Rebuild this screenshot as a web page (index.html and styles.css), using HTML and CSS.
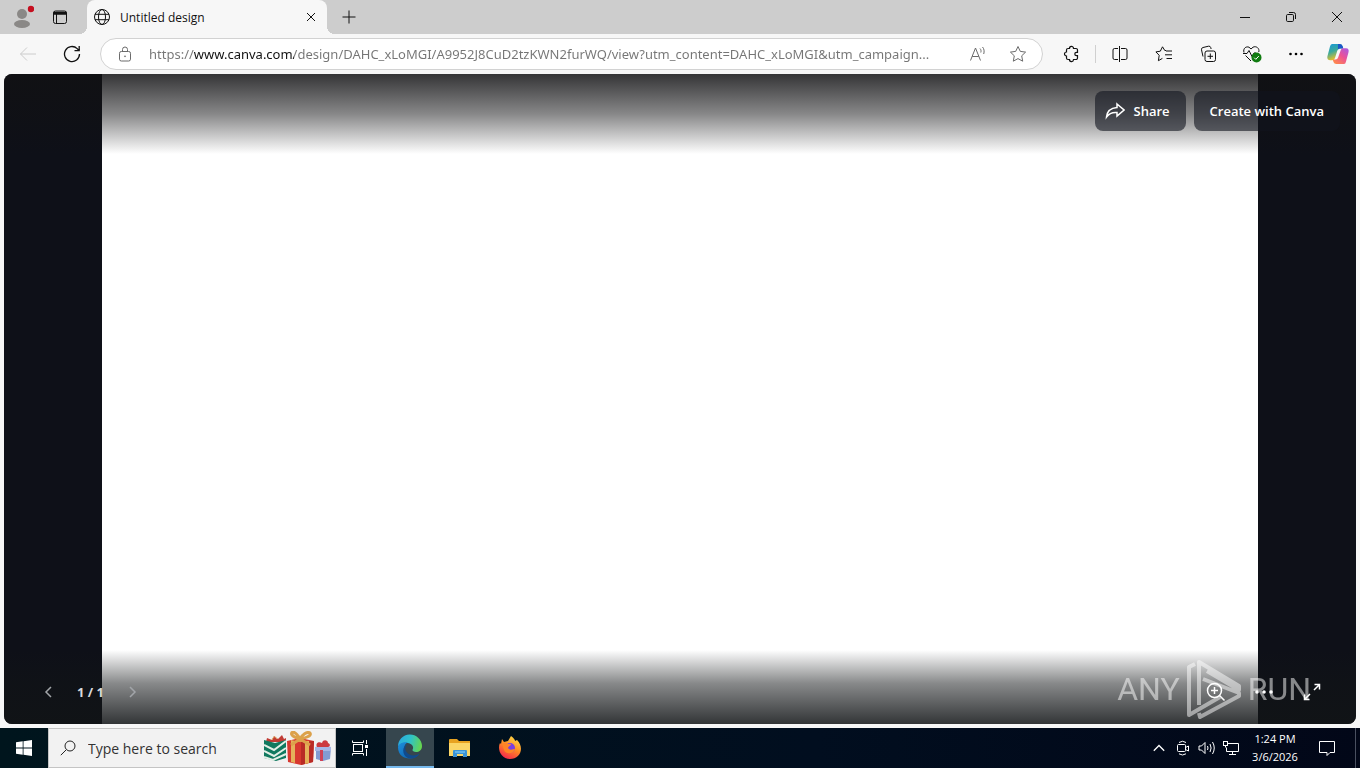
FILE: index.html
```html
<!DOCTYPE html>
<html lang="en">
<head>
    <meta charset="UTF-8">
    <meta name="viewport" content="width=device-width, initial-scale=1.0">
    <title>Untitled design</title>
    <link rel="stylesheet" href="styles.css">
</head>
<body>
    <header class="tab-strip">
        <div class="strip-left">
            <button class="profile" aria-label="Profile">
                <svg width="24" height="24" viewBox="0 0 24 24"><circle cx="12" cy="9" r="5" fill="#8a8886"/><ellipse cx="12" cy="19" rx="8" ry="4" fill="#8a8886"/><circle cx="21" cy="4" r="3.2" fill="#c50f1f"/></svg>
            </button>
            <button class="workspaces" aria-label="Tab actions">
                <svg class="icon" width="16" height="16" viewBox="0 0 16 16"><rect x="1.5" y="2" width="13" height="12.5" rx="2"/><path d="M1.5 3.5h13M2 5h12" stroke-width="1.6"/><path d="M4.5 5v9"/></svg>
            </button>
        </div>
        <div class="tab">
            <svg class="icon" width="18" height="18" viewBox="0 0 18 18"><circle cx="9" cy="9" r="7.5"/><ellipse cx="9" cy="9" rx="3.5" ry="7.5"/><path d="M2 6.3h14M2 11.7h14"/></svg>
            <span class="tab-title">Untitled design</span>
            <button class="tab-close" aria-label="Close tab">
                <svg class="icon" width="10" height="10" viewBox="0 0 10 10"><path d="M1 1l8 8M9 1l-8 8"/></svg>
            </button>
        </div>
        <button class="new-tab" aria-label="New tab">
            <svg class="icon" width="14" height="14" viewBox="0 0 14 14"><path d="M7 .5v13M.5 7h13"/></svg>
        </button>
        <div class="window-buttons">
            <button aria-label="Minimize"><svg class="icon" width="10" height="10" viewBox="0 0 10 10"><path d="M0 5.5h10"/></svg></button>
            <button aria-label="Restore"><svg class="icon" width="12" height="12" viewBox="0 0 12 12"><rect x="1.5" y="3.5" width="7" height="7" rx="1.2"/><path d="M4 1.5h4.5a2 2 0 0 1 2 2V8"/></svg></button>
            <button aria-label="Close"><svg class="icon" width="12" height="12" viewBox="0 0 12 12"><path d="M1 1l10 10M11 1L1 11"/></svg></button>
        </div>
    </header>

    <nav class="toolbar">
        <button class="tool disabled" aria-label="Back">
            <svg class="icon" width="18" height="16" viewBox="0 0 18 16"><path d="M17 8H1.500M8 1.500L1.500 8 8 14.500"/></svg>
        </button>
        <button class="tool" aria-label="Refresh">
            <svg class="icon" width="18" height="18" viewBox="0 0 18 18"><path d="M16.500 9a7.500 7.500 0 1 1-2.300-5.400L16 5.500M16.200 1v4.700h-4.700" stroke-width="1.300"/></svg>
        </button>
        <div class="address">
            <button class="lock" aria-label="Site information">
                <svg class="icon" width="14" height="16" viewBox="0 0 14 16"><rect x="1.500" y="5.500" width="11" height="9.500" rx="1.800"/><path d="M4.500 5.500V3.500a2.500 2.500 0 0 1 5 0v2"/><circle cx="7" cy="10.300" r=".5"/></svg>
            </button>
            <input class="url" type="text" aria-label="Address" value="https://www.canva.com/design/DAHC_xLoMGI/A9952J8CuD2tzKWN2furWQ/view?utm_content=DAHC_xLoMGI&amp;utm_campaign...">
            <button class="address-action" aria-label="Read aloud">
                <svg class="icon" width="18" height="16" viewBox="0 0 18 16"><path d="M1.500 14.500L6.500 2l5 12.500M3.200 10.500h6.600M11 2.500c1 1 1.300 2.500.8 4M13.500 1c1.700 2 2 4.300 1.200 7"/></svg>
            </button>
            <button class="address-action" aria-label="Add to favorites">
                <svg class="icon" width="18" height="18" viewBox="0 0 18 18"><path d="M9 1.500l2.300 4.900 5.300.7-3.900 3.700 1 5.400L9 13.600l-4.700 2.600 1-5.400-3.900-3.700 5.300-.7z"/></svg>
            </button>
        </div>
        <button class="tool" aria-label="Extensions">
            <svg class="icon" width="18" height="18" viewBox="0 0 18 18"><path d="M4.500 5A1.500 1.500 0 0 1 6 3.500h1.500a2 2 0 0 1 4-.2v.2H14A1.500 1.500 0 0 1 15.500 5v2.300h-1a1.700 1.700 0 0 0 0 3.400h1V13a1.500 1.500 0 0 1-1.500 1.500h-2.500v.3a2 2 0 0 1-4-.3H6A1.500 1.500 0 0 1 4.500 13v-2a2 2 0 0 1 0-4z" stroke-width="1.200"/></svg>
        </button>
        <span class="divider"></span>
        <button class="tool" aria-label="Split screen">
            <svg class="icon" width="18" height="18" viewBox="0 0 18 18"><path d="M7 3.500H3.500A1.500 1.500 0 0 0 2 5v8a1.500 1.500 0 0 0 1.500 1.500H7M10 3.500h4.500A1.500 1.500 0 0 1 16 5v8a1.500 1.500 0 0 1-1.500 1.500H10M8.500 1v16"/></svg>
        </button>
        <button class="tool" aria-label="Favorites">
            <svg class="icon" width="18" height="18" viewBox="0 0 18 18"><path d="M11 5.500H9.800L7.500 1.800 5.300 6.200l-4.400.7 3.300 3.400-.8 5.400 4-2.300M11 6h6M10 9.800h7M11.500 13.500H17"/></svg>
        </button>
        <button class="tool" aria-label="Collections">
            <svg class="icon" width="18" height="18" viewBox="0 0 18 18"><path d="M4 11.500l-1.500-6.700a2 2 0 0 1 1.500-2.300l5.500-1.300a2 2 0 0 1 2.300 1.500l.3 1.300"/><rect x="6" y="6" width="10.500" height="10.500" rx="2"/><path d="M11.300 8.500v5.500M8.500 11.300H14"/></svg>
        </button>
        <button class="tool" aria-label="Browser essentials">
            <svg class="icon" width="20" height="18" viewBox="0 0 20 18"><path d="M2 7.500C.8 3.500 4 1 7 2.200L9 4l2-1.800c3-1.600 6.800 1 5.800 4.800M3.500 10.500L9 16M1 8.500h4l2-3 3 6 2-3.500h2"/><circle cx="14.500" cy="12.500" r="5" fill="#107c10" stroke="none"/><path d="M12.200 12.700l1.600 1.600 3-3.200" stroke="#fff"/></svg>
        </button>
        <button class="tool" aria-label="Settings and more">
            <svg width="16" height="16" viewBox="0 0 16 16"><circle cx="2.500" cy="8" r="1.300"/><circle cx="8" cy="8" r="1.300"/><circle cx="13.500" cy="8" r="1.300"/></svg>
        </button>
        <button class="tool copilot" aria-label="Copilot">
            <svg width="24" height="24" viewBox="0 0 24 24">
                <defs>
                    <linearGradient id="cpA" x1="0" y1="0" x2=".4" y2="1"><stop offset="0" stop-color="#1497dc"/><stop offset=".5" stop-color="#3ba99b"/><stop offset="1" stop-color="#f4c21f"/></linearGradient>
                    <linearGradient id="cpB" x1="1" y1="0" x2=".2" y2="1"><stop offset="0" stop-color="#a35bea"/><stop offset=".5" stop-color="#ec5296"/><stop offset="1" stop-color="#ff8a4c"/></linearGradient>
                </defs>
                <path d="M6 2h7.500a3 3 0 0 1 3 2l.8 2.500h-3a3 3 0 0 0-3 2.200L9 16a3 3 0 0 1-3 2.200H4C1.500 18.200 1 16 1.500 14L4 4.500Q4.500 2 6 2z" fill="url(#cpA)"/>
                <path d="M12 2h1.500a3 3 0 0 1 3 2l.8 2.500h-3a3 3 0 0 0-2.400 1.300z" fill="#1c56c9"/>
                <path d="M18 22h-7.500a3 3 0 0 1-3-2l-.8-2.500h2.500a3 3 0 0 0 3-2.200L14.800 8A2.500 2.500 0 0 1 17 6.200h3c2.500 0 3 2 2.500 4L20 19.500Q19.500 22 18 22z" fill="url(#cpB)"/>
            </svg>
        </button>
    </nav>

    <main class="viewer">
        <div class="design-page"></div>
        <div class="shade shade-top"></div>
        <div class="shade shade-bottom"></div>
        <div class="viewer-top">
            <button class="canva-button share">
                <svg class="icon" width="20" height="18" viewBox="0 0 20 18"><path d="M12 2l7 6-7 6v-3.500C7 10 4 11.500 1.500 15 2 9.500 6 6 12 5.500z"/></svg>
                Share
            </button>
            <button class="canva-button">Create with Canva</button>
        </div>
        <div class="watermark">
            <span>ANY</span>
            <svg width="58" height="64" viewBox="0 0 58 64" fill="none" stroke="currentColor" stroke-width="4" stroke-linejoin="round"><path d="M10 7L4 10v48l31-18M14 48V5l40 24v4L22 14M18 22l36 14v3L15 60l-1-4"/></svg>
            <span>RUN</span>
        </div>
        <div class="viewer-bottom">
            <button class="pager" aria-label="Previous page"><svg class="icon" width="8" height="12" viewBox="0 0 8 12"><path d="M7 1L2 6l5 5"/></svg></button>
            <span class="page-count">1 / 1</span>
            <button class="pager" aria-label="Next page"><svg class="icon" width="8" height="12" viewBox="0 0 8 12"><path d="M1 1l5 5-5 5"/></svg></button>
            <div class="view-tools">
                <button aria-label="Zoom"><svg class="icon" width="20" height="20" viewBox="0 0 20 20"><circle cx="8.500" cy="8.500" r="7"/><path d="M13.500 13.500l5 5M8.500 5v7M5 8.500h7"/></svg></button>
                <button aria-label="More"><svg width="20" height="6" viewBox="0 0 20 6" fill="#fff"><circle cx="3" cy="3" r="1.800"/><circle cx="10" cy="3" r="1.800"/><circle cx="17" cy="3" r="1.800"/></svg></button>
                <button aria-label="Full screen"><svg class="icon" width="18" height="18" viewBox="0 0 18 18"><path d="M11 7l5.500-5.500M11.500 1.500h5v5M7 11l-5.500 5.500M1.500 11.500v5h5"/></svg></button>
            </div>
        </div>
    </main>

    <footer class="taskbar">
        <button class="task" aria-label="Start">
            <svg width="16" height="16" viewBox="0 0 16 16" fill="#fff"><path d="M0 2.200L6.700 1.300v6.300H0zM7.500 1.200L16 0v7.600H7.500zM0 8.400h6.700v6.300L0 13.800zM7.500 8.400H16V16l-8.500-1.200z"/></svg>
        </button>
        <label class="search">
            <svg class="icon" width="16" height="16" viewBox="0 0 16 16"><circle cx="10" cy="6" r="5"/><path d="M6.300 9.700L.8 15.200"/></svg>
            <input type="text" placeholder="Type here to search" aria-label="Type here to search">
            <svg class="gifts" width="68" height="34" viewBox="0 0 68 34">
                <path d="M2 11l1-4 5 2 2-4 4 3 4-4 2 4 2-1v4z" fill="#c13b34"/>
                <path d="M8 9q2-6 5-1" stroke="#e0a860" fill="none"/>
                <path d="M0 9l11 3 11-3v18l-10 3-12-3z" fill="#11795f"/>
                <path d="M0 14l10 5 12-9M0 20l10 5 12-8M0 26l9 3 13-6" stroke="#e3efe6" stroke-width="2" fill="none"/>
                <path d="M23 10l13-3 14 3-1 21-12 3-13-3z" fill="#d8382f"/>
                <path d="M37 11l13-1-1 21-12 3z" fill="#b92b26"/>
                <path d="M27 9l4 1v22l-4-1zM41 10l4 0v22l-4 1z" fill="#e5b05a"/>
                <path d="M36 8C31 7 26 4 28 1.500c3-1.500 6 3 8 6.500 2-4 7-8 10-6 2 3-5 5-10 6l10 6M36 8l-9 6" stroke="#dca14b" stroke-width="3" fill="none"/>
                <path d="M52 17l7-2 8 2-1 11-7 2-7-2z" fill="#829bd2"/>
                <path d="M51 16l8-2 8 2v4H51z" fill="#a6b6e4"/>
                <path d="M56 19h3v11h-3z" fill="#cf4257"/>
                <path d="M53 16c-2-4 2-6 5-4 1-4 6-3 6 0 3 1 2 4 0 4z" fill="#cc3a3f"/>
            </svg>
        </label>
        <div class="apps">
            <button class="task" aria-label="Task view">
                <svg class="icon" width="18" height="18" viewBox="0 0 18 18"><rect x="2.500" y="5.500" width="9" height="7"/><path d="M1.500 1.500v2h11v-2M1.500 16.500v-2h11v2M15.500 1v4M15.500 10v7"/><path d="M15.500 6v3" stroke-width="3"/></svg>
            </button>
            <button class="task active" aria-label="Microsoft Edge">
                <svg width="26" height="26" viewBox="0 0 26 26">
                    <defs>
                        <linearGradient id="edgeTop" x1="0" y1=".3" x2="1" y2=".5"><stop offset="0" stop-color="#2aa9e0"/><stop offset=".5" stop-color="#2fc2c8"/><stop offset="1" stop-color="#66d64f"/></linearGradient>
                        <linearGradient id="edgeLow" x1="0" y1="0" x2="1" y2="1"><stop offset="0" stop-color="#1c8fdd"/><stop offset="1" stop-color="#0c59a4"/></linearGradient>
                    </defs>
                    <path d="M1 13A12 12 0 0 1 25 12c0 4-3 6-6 6-2 0-4-1-3.500-2.200C17 14 16 10 11 9 6 8.500 2 10 1 13z" fill="url(#edgeTop)"/>
                    <path d="M1 13c1-4 6-5.500 10-4.500-3 1-4 3.500-3.500 7 .8 5 6 8 11 6.700l3.500-2C17 27 1 26.500 1 13z" fill="url(#edgeLow)"/>
                    <path d="M11 10c-3 2-3.500 5-1.500 8 3 4.500 9.500 4 13 1.500-2 4-8 6.500-12 4.300C5 21 4.500 12 11 10z" fill="#114a8b"/>
                </svg>
            </button>
            <button class="task" aria-label="File Explorer">
                <svg width="22" height="20" viewBox="0 0 22 20"><path d="M0 2q0-1 1-1h7l2 2h11v15H0z" fill="#e8a321"/><path d="M0 5h21v13H0z" fill="#fbd667"/><path d="M4 19v-6q0-1 1-1h12q1 0 1 1v6h-4v-3H8v3z" fill="#3b93d6"/><path d="M6 13h10v2H6z" fill="#63b5ec"/></svg>
            </button>
            <button class="task" aria-label="Firefox">
                <svg width="24" height="24" viewBox="0 0 24 24">
                    <defs><linearGradient id="fox" x1=".8" y1="0" x2=".3" y2="1"><stop offset="0" stop-color="#ffe14a"/><stop offset=".5" stop-color="#ff8a24"/><stop offset="1" stop-color="#f5254d"/></linearGradient></defs>
                    <path d="M4 3l2 3 4-1 3-5c3 2 4 4 4 5l2-1c8 8 3 19-7 19C3 23-1 13 2 7l1 1z" fill="url(#fox)"/>
                    <circle cx="12" cy="12" r="5" fill="#7a3fe0"/>
                    <path d="M4 8c3-2 5-1 6 0h3c0 2-3 2-3 4 2 3 5 1 7 1-1 5-9 6-11 1z" fill="#ff8426"/>
                </svg>
            </button>
        </div>
        <div class="tray">
            <button class="tray-icon" aria-label="Show hidden icons"><svg class="icon" width="12" height="8" viewBox="0 0 12 8"><path d="M.8 6.800L6 1.500l5.200 5.300" stroke-width="1.300"/></svg></button>
            <button class="tray-icon" aria-label="Meet now"><svg class="icon" width="14" height="16" viewBox="0 0 14 16"><rect x="1.500" y="4.500" width="8" height="7" rx="1"/><path d="M9.500 7.500l3-1.500v5l-3-1.500M3 2.500Q6.500 0 10 2.500M3 13.800q3.500 2.400 7 0"/></svg></button>
            <button class="tray-icon" aria-label="Volume"><svg class="icon" width="18" height="16" viewBox="0 0 18 16"><path d="M1 6v4h2.500L7 13.500v-11L3.500 6zM9.500 6q1 2 0 4M12 4q2.200 4 0 8M14.500 2q3.500 6 0 12"/></svg></button>
            <button class="tray-icon" aria-label="Network"><svg class="icon" width="18" height="16" viewBox="0 0 18 16"><path d="M6 3.500h10.500v8H4.500v-4M10.500 11.500v3M7 14.500h7"/><rect x="1.500" y="1.500" width="4" height="4"/><path d="M3.500 5.500v2"/></svg></button>
            <button class="clock"><span>1:24 PM</span><span>3/6/2026</span></button>
            <button class="notifications" aria-label="Notifications"><svg class="icon" width="18" height="18" viewBox="0 0 18 18"><path d="M1.500 2.500h15v11H12l-3 3v-3H1.500z"/></svg></button>
            <button class="show-desktop" aria-label="Show desktop"></button>
        </div>
    </footer>
</body>
</html>
```
FILE: styles.css
```css
* {
    box-sizing: border-box;
}
body {
    margin: 0;
    height: 100vh;
    display: flex;
    flex-direction: column;
    overflow: hidden;
    background: #f7f7f7;
    color: #111;
    font-family: "Open Sans", "Noto Sans", sans-serif;
    font-size: 12px;
}
button {
    display: flex;
    align-items: center;
    justify-content: center;
    margin: 0;
    padding: 0;
    border: 0;
    background: none;
    color: inherit;
    font: inherit;
}
input {
    min-width: 0;
    padding: 0;
    border: 0;
    outline: 0;
    background: none;
    font: inherit;
}
svg {
    display: block;
    flex: none;
}
.icon {
    fill: none;
    stroke: currentColor;
}

/* tabs */
.tab-strip {
    display: flex;
    flex: none;
    height: 34px;
    background: #cdcdcd;
}
.strip-left {
    display: flex;
    width: 87px;
    padding-left: 4px;
}
.profile {
    width: 36px;
}
.workspaces {
    width: 40px;
}
.tab {
    position: relative;
    display: flex;
    align-items: center;
    gap: 9px;
    width: 240px;
    padding: 0 6px;
    border-radius: 8px 8px 0 0;
    background: #f7f7f7;
}
.tab::before,
.tab::after {
    content: "";
    position: absolute;
    bottom: 0;
    width: 8px;
    height: 8px;
}
.tab::before {
    right: 100%;
    background: radial-gradient(circle at 0 0, #cdcdcd 8px, #f7f7f7 8px);
}
.tab::after {
    left: 100%;
    background: radial-gradient(circle at 100% 0, #cdcdcd 8px, #f7f7f7 8px);
}
.tab-title {
    flex: 1;
}
.tab-close {
    width: 20px;
    height: 20px;
}
.new-tab {
    width: 43px;
}
.window-buttons {
    display: flex;
    margin-left: auto;
}
.window-buttons button {
    width: 46px;
}

/* toolbar */
.toolbar {
    display: flex;
    flex: none;
    align-items: center;
    height: 40px;
    padding: 0 2px 0 6px;
}
.tool {
    flex: none;
    width: 44px;
    height: 32px;
}
.disabled {
    color: #ccc;
}
.copilot {
    width: 40px;
}
.divider {
    width: 1px;
    height: 18px;
    margin: 0 2px;
    background: #d0d0d0;
}
.address {
    display: flex;
    flex: 1;
    align-items: center;
    height: 32px;
    margin: 0 6px;
    padding-right: 4px;
    border: 1px solid #d2d2d2;
    border-radius: 16px;
    background: #fff;
    color: #6b6b6b;
}
.lock {
    width: 48px;
    height: 30px;
}
/* only the host part of the address is dark */
.url {
    flex: 1;
    height: 30px;
    font-family: "Noto Sans", "Open Sans", sans-serif;
    font-size: 13px;
    color: transparent;
    caret-color: #111;
    background: linear-gradient(90deg, #757575 45px, #111 45px, #111 145px, #757575 145px);
    -webkit-background-clip: text;
    background-clip: text;
}
.address-action {
    width: 40px;
    height: 30px;
}

/* design viewer */
.viewer {
    position: relative;
    display: flex;
    flex: 1;
    justify-content: center;
    min-height: 0;
    margin: 0 4px 4px;
    border-radius: 8px;
    overflow: hidden;
    background: #0e1018;
    color: #fff;
}
.design-page {
    height: 100%;
    aspect-ratio: 16 / 9;
    background: #fff;
}
.shade {
    position: absolute;
    left: 0;
    right: 0;
}
.shade-top {
    top: 0;
    height: 80px;
    background: linear-gradient(rgba(17, 17, 19, 0.85), rgba(17, 17, 19, 0.5) 50%, rgba(17, 17, 19, 0));
}
.shade-bottom {
    bottom: 0;
    height: 74px;
    background: linear-gradient(rgba(17, 20, 22, 0), rgba(17, 20, 22, 0.5) 45%, rgba(17, 20, 22, 0.86));
}
.viewer-top {
    position: absolute;
    top: 17px;
    right: 16px;
    display: flex;
    gap: 8px;
}
.canva-button {
    gap: 9px;
    height: 40px;
    padding: 0 16px;
    border-radius: 8px;
    background: rgba(17, 20, 30, 0.6);
    font-size: 13px;
    font-weight: 600;
}
.share {
    padding-left: 10px;
}
.share .icon {
    stroke-width: 1.5;
}
.watermark {
    position: absolute;
    right: 45px;
    bottom: 3px;
    display: flex;
    align-items: center;
    gap: 5px;
    color: #fff;
    opacity: 0.5;
    font-family: Roboto, "Liberation Sans", sans-serif;
    font-size: 32px;
}
.viewer-bottom {
    position: absolute;
    left: 24px;
    right: 20px;
    bottom: 12px;
    display: flex;
    align-items: center;
    height: 40px;
}
.pager {
    width: 40px;
    height: 40px;
    color: #a2a5a9;
}
.pager .icon {
    stroke-width: 1.5;
}
.page-count {
    width: 45px;
    text-align: center;
    color: #d8dade;
    font-size: 13px;
    font-weight: 700;
}
.view-tools {
    display: flex;
    margin-left: auto;
}
.view-tools button {
    width: 48px;
    height: 40px;
}
.view-tools .icon {
    stroke-width: 1.5;
}

/* taskbar */
.taskbar {
    display: flex;
    flex: none;
    height: 40px;
    background: linear-gradient(90deg, #00151d, #010e1f 60%, #020718);
    color: #fff;
}
.task {
    width: 48px;
    height: 40px;
}
.search {
    display: flex;
    align-items: center;
    gap: 12px;
    width: 288px;
    padding: 0 3px 0 11px;
    border: 1px solid #c4c4c4;
    background: #f2f2f2;
    color: #222;
}
.search input {
    flex: 1;
    font-size: 14px;
}
.search input::placeholder {
    color: #333;
    opacity: 1;
}
.apps {
    display: flex;
    gap: 2px;
}
.active {
    background: #36464e;
    border-bottom: 2px solid #76b9ed;
}
.tray {
    display: flex;
    margin-left: auto;
}
.tray-icon {
    width: 24px;
}
.clock {
    flex-direction: column;
    width: 64px;
    line-height: 18px;
    font-size: 11px;
}
.notifications {
    width: 40px;
}
.show-desktop {
    width: 5px;
    margin-left: 8px;
    border-left: 1px solid #4a5060;
}
```
